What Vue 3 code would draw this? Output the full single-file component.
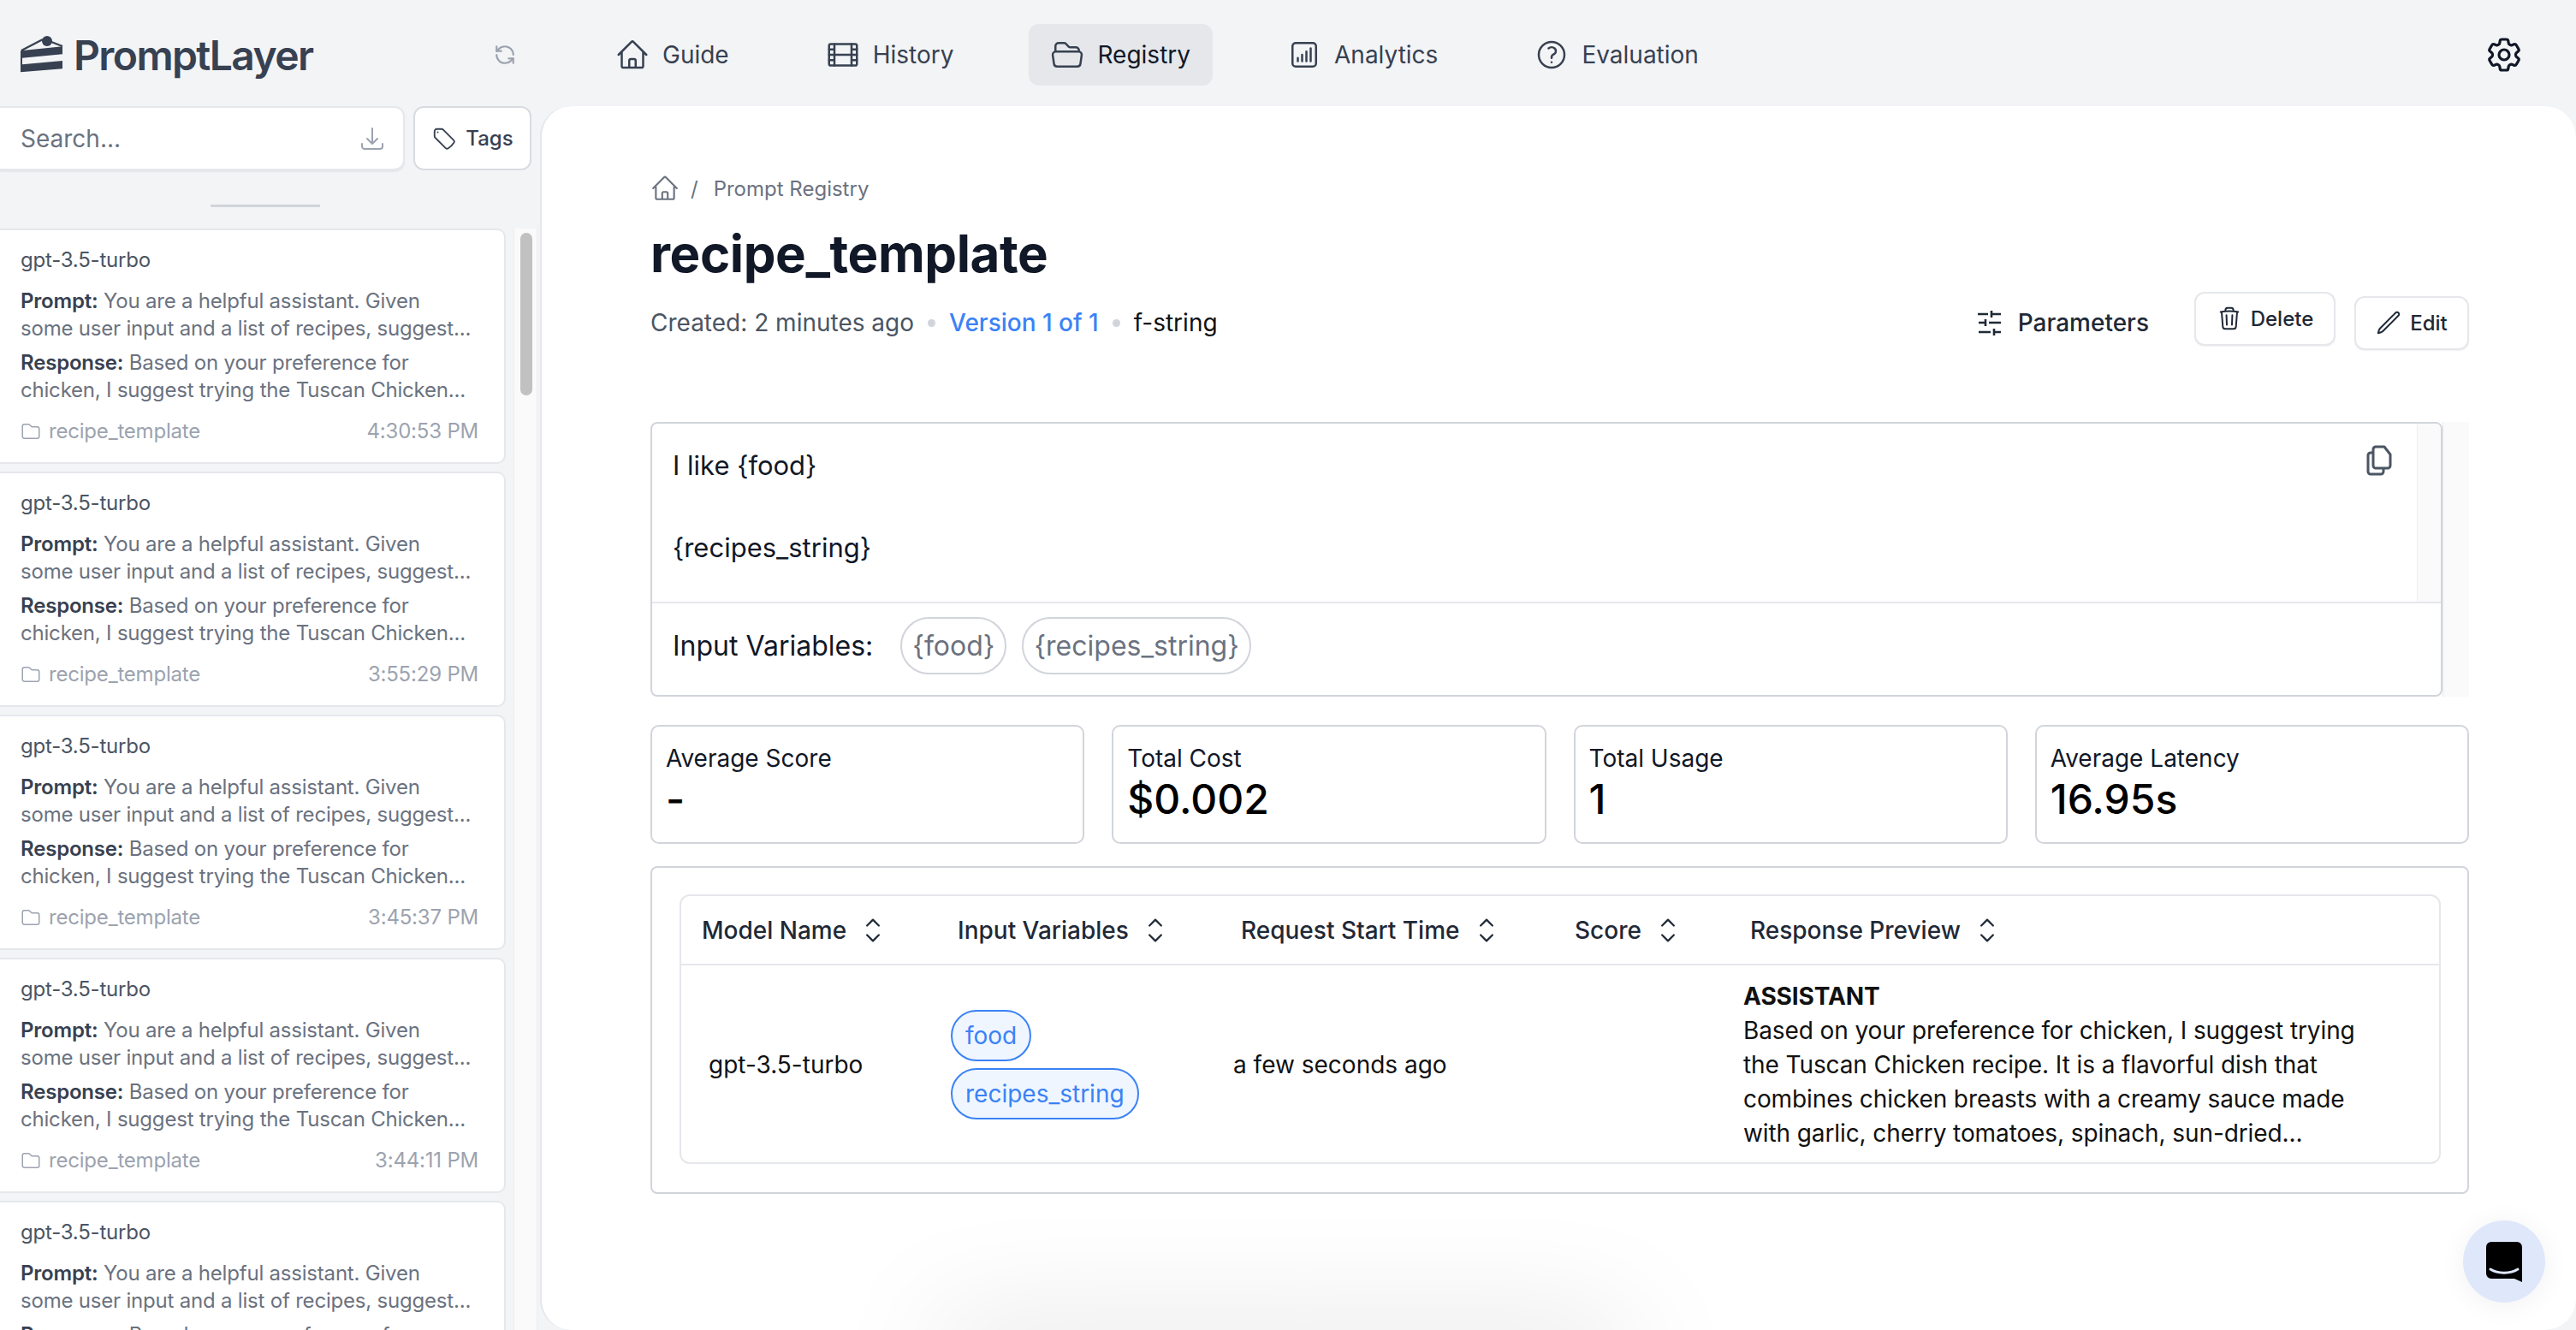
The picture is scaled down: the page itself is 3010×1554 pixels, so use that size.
<script setup>
const cards = [
  { time: '4:30:53 PM' },
  { time: '3:55:29 PM' },
  { time: '3:45:37 PM' },
  { time: '3:44:11 PM' },
  { time: '3:40:02 PM' },
];

const navItems = [
  { label: 'Guide', paths: ['M2.25 12l8.954-8.955c.44-.439 1.152-.439 1.591 0L21.75 12M4.5 9.75v10.125c0 .621.504 1.125 1.125 1.125H9.75v-4.875c0-.621.504-1.125 1.125-1.125h2.25c.621 0 1.125.504 1.125 1.125V21h4.125c.621 0 1.125-.504 1.125-1.125V9.75M8.25 21h8.25'] },
  { label: 'History', paths: ['M3.375 4.5h17.25c.621 0 1.125.504 1.125 1.125v12.75c0 .621-.504 1.125-1.125 1.125H3.375c-.621 0-1.125-.504-1.125-1.125V5.625c0-.621.504-1.125 1.125-1.125z', 'M6 4.5v15M18 4.5v15M6 12h12M2.25 8.25H6M2.25 12H6M2.25 15.75H6M18 8.25h3.75M18 12h3.75M18 15.75h3.75'] },
  { label: 'Registry', active: true, paths: ['M3.75 9.776c.112-.017.227-.026.344-.026h15.812c.117 0 .232.009.344.026m-16.5 0a2.25 2.25 0 00-1.883 2.542l.857 6a2.25 2.25 0 002.227 1.932H19.05a2.25 2.25 0 002.227-1.932l.857-6a2.25 2.25 0 00-1.883-2.542m-16.5 0V6A2.25 2.25 0 016 3.75h3.879a1.5 1.5 0 011.06.44l2.122 2.12a1.5 1.5 0 001.06.44H18A2.25 2.25 0 0120.25 9v.776'] },
  { label: 'Analytics', paths: ['M7.5 14.25v2.25m3-4.5v4.5m3-6.75v6.75m3-9v9M6 20.25h12A2.25 2.25 0 0020.25 18V6A2.25 2.25 0 0018 3.75H6A2.25 2.25 0 003.75 6v12A2.25 2.25 0 006 20.25z'] },
  { label: 'Evaluation', paths: ['M9.879 7.519c1.171-1.025 3.071-1.025 4.242 0 1.172 1.025 1.172 2.687 0 3.712-.203.179-.43.326-.67.442-.745.361-1.45.999-1.45 1.827v.75M21 12a9 9 0 11-18 0 9 9 0 0118 0zm-9 5.25h.008v.008H12v-.008z'] },
];

const stats = [
  { label: 'Average Score', value: '-' },
  { label: 'Total Cost', value: '$0.002' },
  { label: 'Total Usage', value: '1' },
  { label: 'Average Latency', value: '16.95s' },
];

const columns = ['Model Name', 'Input Variables', 'Request Start Time', 'Score', 'Response Preview'];
const homePath = navItems[0].paths[0];
</script>

<template>
  <div class="page">
    <header class="topbar">
      <div class="logo">
        <svg class="logo-icon" viewBox="0 0 50 46">
          <circle cx="31" cy="7" r="6" fill="#374151" />
          <path d="M1 18 26 5M36 8l13 5" fill="none" stroke="#374151" stroke-width="2.4" />
          <path d="M0 18.3 49 13.3V22.3L2 26.7V34.3L49 30V39.3L0 43.3z" fill="#374151" />
        </svg>
        <span>PromptLayer</span>
      </div>
      <svg class="refresh" viewBox="0 0 24 24" fill="none" stroke="#9ca3af" stroke-width="2" stroke-linecap="round" stroke-linejoin="round">
        <path d="M21 12a9 9 0 0 0-9-9 9.75 9.75 0 0 0-6.74 2.74L3 8" />
        <path d="M3 3v5h5" />
        <path d="M3 12a9 9 0 0 0 9 9 9.75 9.75 0 0 0 6.74-2.74L21 16" />
        <path d="M16 16h5v5" />
      </svg>
      <nav class="nav">
        <a v-for="item in navItems" :key="item.label" class="nav-item" :class="{ active: item.active }">
          <svg class="nav-icon" viewBox="0 0 24 24" fill="none" stroke="#374151" stroke-width="1.5" stroke-linecap="round" stroke-linejoin="round">
            <path v-for="d in item.paths" :key="d" :d="d" />
          </svg>
          <span>{{ item.label }}</span>
        </a>
      </nav>
      <svg class="gear" viewBox="0 0 24 24" fill="none" stroke="#111827" stroke-width="1.6" stroke-linecap="round" stroke-linejoin="round">
        <path d="M9.594 3.94c.09-.542.56-.94 1.11-.94h2.593c.55 0 1.02.398 1.11.94l.213 1.281c.063.374.313.686.645.87.074.04.147.083.22.127.324.196.72.257 1.075.124l1.217-.456a1.125 1.125 0 011.37.49l1.296 2.247a1.125 1.125 0 01-.26 1.431l-1.003.827c-.293.24-.438.613-.431.992a6.759 6.759 0 010 .255c-.007.378.138.75.43.99l1.005.828c.424.35.534.954.26 1.43l-1.298 2.247a1.125 1.125 0 01-1.369.491l-1.217-.456c-.355-.133-.75-.072-1.076.124a6.57 6.57 0 01-.22.128c-.331.183-.581.495-.644.869l-.213 1.28c-.09.543-.56.941-1.11.941h-2.594c-.55 0-1.02-.398-1.11-.94l-.213-1.281c-.062-.374-.312-.686-.644-.87a6.52 6.52 0 01-.22-.127c-.325-.196-.72-.257-1.076-.124l-1.217.456a1.125 1.125 0 01-1.369-.49l-1.297-2.247a1.125 1.125 0 01.26-1.431l1.004-.827c.292-.24.437-.613.43-.992a6.932 6.932 0 010-.255c.007-.378-.138-.75-.43-.99l-1.004-.828a1.125 1.125 0 01-.26-1.43l1.297-2.247a1.125 1.125 0 011.37-.491l1.216.456c.356.133.751.072 1.076-.124.072-.044.146-.087.22-.128.332-.183.582-.495.644-.869l.214-1.281z" />
        <path d="M15 12a3 3 0 11-6 0 3 3 0 016 0z" />
      </svg>
    </header>

    <div class="body">
      <aside class="sidebar">
        <div class="search-row">
          <div class="search">
            <span>Search...</span>
            <svg class="tray" viewBox="0 0 24 24" fill="none" stroke="#9ca3af" stroke-width="1.5" stroke-linecap="round" stroke-linejoin="round">
              <path d="M3 16.5v2.25A2.25 2.25 0 005.25 21h13.5A2.25 2.25 0 0021 18.75V16.5M16.5 12L12 16.5m0 0L7.5 12m4.5 4.5V3" />
            </svg>
          </div>
          <button class="tags">
            <svg viewBox="0 0 24 24" fill="none" stroke="#374151" stroke-width="1.5" stroke-linecap="round" stroke-linejoin="round">
              <path d="M9.568 3H5.25A2.25 2.25 0 003 5.25v4.318c0 .597.237 1.17.659 1.591l9.581 9.581c.699.699 1.78.872 2.607.33a18.095 18.095 0 005.223-5.223c.542-.827.369-1.908-.33-2.607L11.16 3.66A2.25 2.25 0 009.568 3z" />
              <path d="M6 6h.008v.008H6V6z" />
            </svg>
            Tags
          </button>
        </div>
        <div class="handle"></div>
        <div class="list-wrap">
          <div class="list">
            <div v-for="card in cards" :key="card.time" class="card">
              <div class="model">gpt-3.5-turbo</div>
              <p class="snippet"><b>Prompt:</b> You are a helpful assistant. Given<br>some user input and a list of recipes, suggest...</p>
              <p class="snippet"><b>Response:</b> Based on your preference for<br>chicken, I suggest trying the Tuscan Chicken...</p>
              <div class="card-foot">
                <span class="folder">
                  <svg viewBox="0 0 24 24" fill="none" stroke="#9ca3af" stroke-width="1.5" stroke-linecap="round" stroke-linejoin="round">
                    <path d="M2.25 18V6a2.25 2.25 0 012.25-2.25h4.879a1.5 1.5 0 011.06.44l2.122 2.12a1.5 1.5 0 001.06.44H19.5A2.25 2.25 0 0121.75 9v9a2.25 2.25 0 01-2.25 2.25h-15A2.25 2.25 0 012.25 18z" />
                  </svg>
                  recipe_template
                </span>
                <span>{{ card.time }}</span>
              </div>
            </div>
          </div>
          <div class="scrollbar"><div class="thumb"></div></div>
        </div>
      </aside>

      <main class="panel">
        <div class="crumbs">
          <svg viewBox="0 0 24 24" fill="none" stroke="#6b7280" stroke-width="1.5" stroke-linecap="round" stroke-linejoin="round">
            <path :d="homePath" />
          </svg>
          <span class="slash">/</span>
          <span>Prompt Registry</span>
        </div>
        <h1>recipe_template</h1>
        <div class="meta-row">
          <div class="meta">
            <span>Created: 2 minutes ago</span>
            <i class="dot"></i>
            <span class="version">Version 1 of 1</span>
            <i class="dot"></i>
            <span class="format">f-string</span>
          </div>
          <div class="actions">
            <span class="params">
              <svg viewBox="0 0 30 30" fill="none" stroke="#1f2937" stroke-width="2.6">
                <path d="M1 5h12M17 1v8M17 5h11M2 15h7M10 11v8M14 15h14M2 26h14M20 22v8M20 26h8" />
              </svg>
              Parameters
            </span>
            <button class="btn delete">
              <svg viewBox="0 0 24 24" fill="none" stroke="#1f2937" stroke-width="1.6" stroke-linecap="round" stroke-linejoin="round">
                <path d="M14.74 9l-.346 9m-4.788 0L9.26 9m9.968-3.21c.342.052.682.107 1.022.166m-1.022-.165L18.16 19.673a2.25 2.25 0 01-2.244 2.077H8.084a2.25 2.25 0 01-2.244-2.077L4.772 5.79m14.456 0a48.108 48.108 0 00-3.478-.397m-12 .562c.34-.059.68-.114 1.022-.165m0 0a48.11 48.11 0 013.478-.397m7.5 0v-.916c0-1.18-.91-2.164-2.09-2.201a51.964 51.964 0 00-3.32 0c-1.18.037-2.09 1.022-2.09 2.201v.916m7.5 0a48.667 48.667 0 00-7.5 0" />
              </svg>
              Delete
            </button>
            <button class="btn edit">
              <svg viewBox="0 0 24 24" fill="none" stroke="#1f2937" stroke-width="1.6" stroke-linecap="round" stroke-linejoin="round">
                <path d="M16.862 4.487l1.687-1.688a1.875 1.875 0 112.652 2.652L6.832 19.82a4.5 4.5 0 01-1.897 1.13l-2.685.8.8-2.685a4.5 4.5 0 011.13-1.897L16.863 4.487z" />
              </svg>
              Edit
            </button>
          </div>
        </div>

        <section class="prompt-wrap">
          <div class="prompt">
            <div class="prompt-body">
              <div class="prompt-text">
                <div>I like {food}</div>
                <div>&nbsp;</div>
                <div>{recipes_string}</div>
              </div>
              <svg class="copy" viewBox="0 0 30 36" fill="none" stroke="#4b5563" stroke-width="3" stroke-linejoin="round">
                <path d="M11 2h10l7 9v13a3 3 0 01-3 3H11a3 3 0 01-3-3V5a3 3 0 013-3z" />
                <path d="M8 9H5a3 3 0 00-3 3v19a3 3 0 003 3h12a3 3 0 003-3v-4" />
              </svg>
              <div class="inner-track"></div>
            </div>
            <div class="vars">
              <span class="vars-label">Input Variables:</span>
              <span class="pill">{food}</span>
              <span class="pill">{recipes_string}</span>
            </div>
          </div>
          <div class="outer-track"></div>
        </section>

        <section class="stats">
          <div v-for="stat in stats" :key="stat.label" class="stat">
            <div class="stat-label">{{ stat.label }}</div>
            <div class="stat-value">{{ stat.value }}</div>
          </div>
        </section>

        <section class="table-box">
          <div class="table">
            <div class="thead">
              <div v-for="col in columns" :key="col" class="th">
                {{ col }}
                <svg viewBox="0 0 24 24" fill="none" stroke="#1f2937" stroke-width="1.2" stroke-linecap="round" stroke-linejoin="round">
                  <path d="M8.25 15L12 18.75 15.75 15m-7.5-6L12 5.25 15.75 9" />
                </svg>
              </div>
            </div>
            <div class="tbody">
              <div class="td td-model">gpt-3.5-turbo</div>
              <div class="td td-vars">
                <span class="tag">food</span>
                <span class="tag">recipes_string</span>
              </div>
              <div class="td td-time">a few seconds ago</div>
              <div class="td"></div>
              <div class="td td-resp">
                <b>ASSISTANT</b>
                <div>Based on your preference for chicken, I suggest trying</div>
                <div>the Tuscan Chicken recipe. It is a flavorful dish that</div>
                <div>combines chicken breasts with a creamy sauce made</div>
                <div>with garlic, cherry tomatoes, spinach, sun-dried...</div>
              </div>
            </div>
          </div>
        </section>

        <div class="bottom-glow"></div>

        <div class="chat">
          <svg viewBox="0 0 42 47">
            <path d="M6 0h30a6 6 0 016 6v41l-9-4H6a6 6 0 01-6-6V6a6 6 0 016-6z" fill="#000" />
            <path d="M5 32c9 5.500 23 5.500 32 0" fill="none" stroke="#dfe8fa" stroke-width="3" stroke-linecap="round" />
          </svg>
        </div>
      </main>
    </div>
  </div>
</template>

<style>
html, body {
  margin: 0;
  background: #f3f4f6;
}
</style>

<style scoped>
.page {
  width: 3010px;
  height: 1554px;
  overflow: hidden;
  background: #f3f4f6;
  font-family: Inter, "Liberation Sans", sans-serif;
  color: #111827;
  display: flex;
  flex-direction: column;
}

.topbar {
  height: 124px;
  flex: none;
  box-sizing: border-box;
  display: flex;
  align-items: center;
  padding: 4px 0 0 24px;
}
.logo {
  display: flex;
  align-items: center;
  gap: 12px;
  width: 553px;
  flex: none;
  font-size: 48px;
  font-weight: 600;
  letter-spacing: -1.6px;
  color: #374151;
}
.logo-icon {
  width: 50px;
  height: 46px;
  flex: none;
}
.refresh {
  width: 26px;
  height: 26px;
  flex: none;
}
.nav {
  display: flex;
  margin-left: 91px;
  gap: 62px;
}
.nav-item {
  display: flex;
  align-items: center;
  gap: 15px;
  height: 72px;
  padding: 0 26px 0 25px;
  border-radius: 12px;
  font-size: 28px;
  color: #374151;
}
.nav-item.active {
  background: #e5e7eb;
  color: #111827;
}
.nav-icon {
  width: 40px;
  height: 40px;
}
.gear {
  width: 48px;
  height: 48px;
  margin-left: auto;
  margin-right: 60px;
}

.body {
  flex: 1;
  display: flex;
  min-height: 0;
}
.sidebar {
  width: 631px;
  flex: none;
  overflow: hidden;
}
.search-row {
  display: flex;
  gap: 10px;
  width: 621px;
}
.search {
  flex: 1;
  height: 75px;
  box-sizing: border-box;
  display: flex;
  align-items: center;
  justify-content: space-between;
  padding: 0 20px 0 24px;
  background: #fff;
  border: 2px solid #e5e7eb;
  border-left: none;
  border-radius: 0 12px 12px 0;
  box-shadow: 0 2px 2px rgba(0, 0, 0, 0.06);
  font-size: 28px;
  color: #6b7280;
}
.tray {
  width: 32px;
  height: 32px;
}
.tags {
  width: 138px;
  height: 75px;
  box-sizing: border-box;
  display: flex;
  align-items: center;
  justify-content: center;
  gap: 10px;
  background: #fff;
  border: 2px solid #d8dbe0;
  border-radius: 12px;
  font: 500 24px Inter, sans-serif;
  color: #374151;
}
.tags svg {
  width: 30px;
  height: 30px;
}
.handle {
  width: 128px;
  height: 3px;
  background: #d1d5db;
  margin: 40px 0 25px 246px;
}
.list-wrap {
  display: flex;
}
.list {
  width: 591px;
  flex: none;
}
.card {
  box-sizing: border-box;
  height: 275px;
  margin-bottom: 9px;
  padding: 19px 30px 0 24px;
  background: #fff;
  border: 2px solid #e5e7eb;
  border-left: none;
  border-radius: 0 10px 10px 0;
  font-size: 24px;
  line-height: 32px;
  letter-spacing: -0.2px;
  color: #6b7280;
}
.model {
  color: #4b5563;
  margin-bottom: 16px;
}
.snippet {
  margin: 0 0 8px;
  white-space: nowrap;
}
.snippet b {
  font-weight: 600;
  color: #374151;
}
.card-foot {
  display: flex;
  justify-content: space-between;
  margin-top: 16px;
  color: #9ca3af;
}
.folder {
  display: flex;
  align-items: center;
  gap: 9px;
}
.folder svg {
  width: 24px;
  height: 24px;
}
.scrollbar {
  width: 28px;
  margin-left: 9px;
  background: #fafafa;
  border-left: 1px solid #eeeeee;
  border-right: 1px solid #eeeeee;
  box-sizing: border-box;
  padding: 5px 5px 0 7px;
  height: 1300px;
}
.thumb {
  height: 190px;
  border-radius: 8px;
  background: #c1c1c1;
}

.panel {
  flex: 1;
  position: relative;
  box-sizing: border-box;
  padding: 80px 125px 0 127px;
  background: #fff;
  border-left: 2px solid #e5e7eb;
  border-radius: 36px;
  box-shadow: 0 0 1px rgba(0, 0, 0, 0.05);
  overflow: hidden;
}
.crumbs {
  display: flex;
  align-items: center;
  height: 32px;
  font-size: 24px;
  color: #6b7280;
}
.crumbs svg {
  width: 34px;
  height: 34px;
}
.slash {
  margin: 0 18px 0 13px;
}
h1 {
  margin: 24px 0 0;
  font-size: 60px;
  line-height: 72px;
  font-weight: 700;
  letter-spacing: -0.4px;
  color: #111827;
}
.meta-row {
  display: flex;
  justify-content: space-between;
  align-items: center;
  height: 76px;
  margin-top: 7px;
}
.meta {
  display: flex;
  align-items: center;
  gap: 16px;
  font-size: 28px;
  color: #4b5563;
}
.dot {
  width: 9px;
  height: 9px;
  border-radius: 50%;
  background: #d1d5db;
}
.version {
  color: #3b82f6;
  font-weight: 500;
}
.format {
  color: #111;
}
.actions {
  display: flex;
  align-items: center;
}
.params {
  display: flex;
  align-items: center;
  gap: 18px;
  font-size: 28px;
  font-weight: 500;
  color: #1f2937;
  margin-right: 53px;
}
.params svg {
  width: 30px;
  height: 30px;
}
.btn {
  display: flex;
  align-items: center;
  justify-content: center;
  gap: 10px;
  height: 63px;
  box-sizing: border-box;
  background: #fff;
  border: 2px solid #e5e7eb;
  border-radius: 12px;
  box-shadow: 0 1px 2px rgba(0, 0, 0, 0.06);
  font: 500 24px Inter, sans-serif;
  color: #1f2937;
  padding: 0;
}
.btn svg {
  width: 30px;
  height: 30px;
}
.delete {
  width: 165px;
  margin-right: 22px;
  position: relative;
  top: -5px;
}
.edit {
  width: 134px;
}

.prompt-wrap {
  display: flex;
  margin-top: 78px;
  height: 321px;
}
.prompt {
  flex: 1;
  box-sizing: border-box;
  border: 2px solid #d1d5db;
  border-radius: 8px;
  overflow: hidden;
}
.prompt-body {
  height: 210px;
  display: flex;
  position: relative;
  box-sizing: border-box;
  border-bottom: 2px solid #e5e7eb;
}
.prompt-text {
  flex: 1;
  padding: 25px 0 0 24px;
  font-size: 31px;
  line-height: 48px;
  color: #111827;
}
.copy {
  position: absolute;
  right: 57px;
  top: 25px;
  width: 30px;
  height: 36px;
}
.inner-track {
  width: 27px;
  background: #fafafa;
  border-left: 1px solid #eee;
}
.vars {
  display: flex;
  align-items: center;
  height: 106px;
  box-sizing: border-box;
  padding: 0 0 8px 24px;
  font-size: 32px;
  color: #111827;
}
.vars-label {
  font-size: 32px;
  margin-right: 32px;
}
.pill {
  height: 67px;
  box-sizing: border-box;
  display: flex;
  align-items: center;
  padding: 0 12px;
  margin-right: 18px;
  border: 2px solid #d1d5db;
  border-radius: 34px;
  font-size: 32px;
  color: #6b7280;
}
.outer-track {
  width: 30px;
  background: #fafafa;
  border-left: 1px solid #e5e7eb;
}

.stats {
  display: grid;
  grid-template-columns: repeat(4, 1fr);
  gap: 32px;
  margin-top: 33px;
}
.stat {
  box-sizing: border-box;
  height: 139px;
  padding: 19px 16px 0;
  border: 2px solid #d1d5db;
  border-radius: 10px;
}
.stat-label {
  font-size: 28px;
  line-height: 36px;
  color: #111827;
}
.stat-value {
  font-size: 48px;
  line-height: 60px;
  font-weight: 500;
  color: #000;
}

.table-box {
  margin-top: 26px;
  height: 383px;
  box-sizing: border-box;
  padding: 31px 31px 0 32px;
  border: 2px solid #d1d5db;
  border-radius: 8px;
}
.table {
  height: 315px;
  box-sizing: border-box;
  border: 2px solid #e5e7eb;
  border-radius: 12px;
}
.thead,
.tbody {
  display: grid;
  grid-template-columns: 299px 331px 390px 205px 1fr;
}
.thead {
  height: 81px;
  border-bottom: 2px solid #e5e7eb;
  box-sizing: border-box;
}
.th {
  display: flex;
  align-items: center;
  gap: 9px;
  padding-left: 24px;
  font-size: 28px;
  font-weight: 500;
  color: #1f2937;
}
.th svg {
  width: 44px;
  height: 44px;
  flex: none;
}
.tbody {
  height: 232px;
  font-size: 28px;
  color: #111;
}
.td {
  display: flex;
  align-items: center;
  white-space: nowrap;
}
.td-model {
  padding-left: 32px;
}
.td-vars {
  flex-direction: column;
  align-items: flex-start;
  justify-content: center;
  gap: 8px;
  padding-left: 16px;
}
.tag {
  height: 60px;
  box-sizing: border-box;
  display: flex;
  align-items: center;
  padding: 0 15px;
  background: #eff6ff;
  border: 2px solid #3b82f6;
  border-radius: 30px;
  color: #3b82f6;
}
.td-time {
  padding-left: 15px;
}
.td-resp {
  flex-direction: column;
  align-items: flex-start;
  justify-content: center;
  padding-left: 16px;
  line-height: 40px;
  letter-spacing: -0.1px;
}
.td-resp b {
  font-weight: 700;
  color: #111;
}

.bottom-glow {
  position: absolute;
  left: 466px;
  width: 800px;
  height: 40px;
  bottom: -50px;
  box-shadow: 0 0 140px rgba(0, 0, 0, 0.22);
}

.chat {
  position: absolute;
  right: 36px;
  bottom: 32px;
  width: 96px;
  height: 96px;
  border-radius: 50%;
  background: #dfe8fa;
  box-shadow: 0 4px 32px rgba(0, 0, 0, 0.06);
  display: flex;
  align-items: center;
  justify-content: center;
}
.chat svg {
  width: 42px;
  height: 47px;
}
</style>
